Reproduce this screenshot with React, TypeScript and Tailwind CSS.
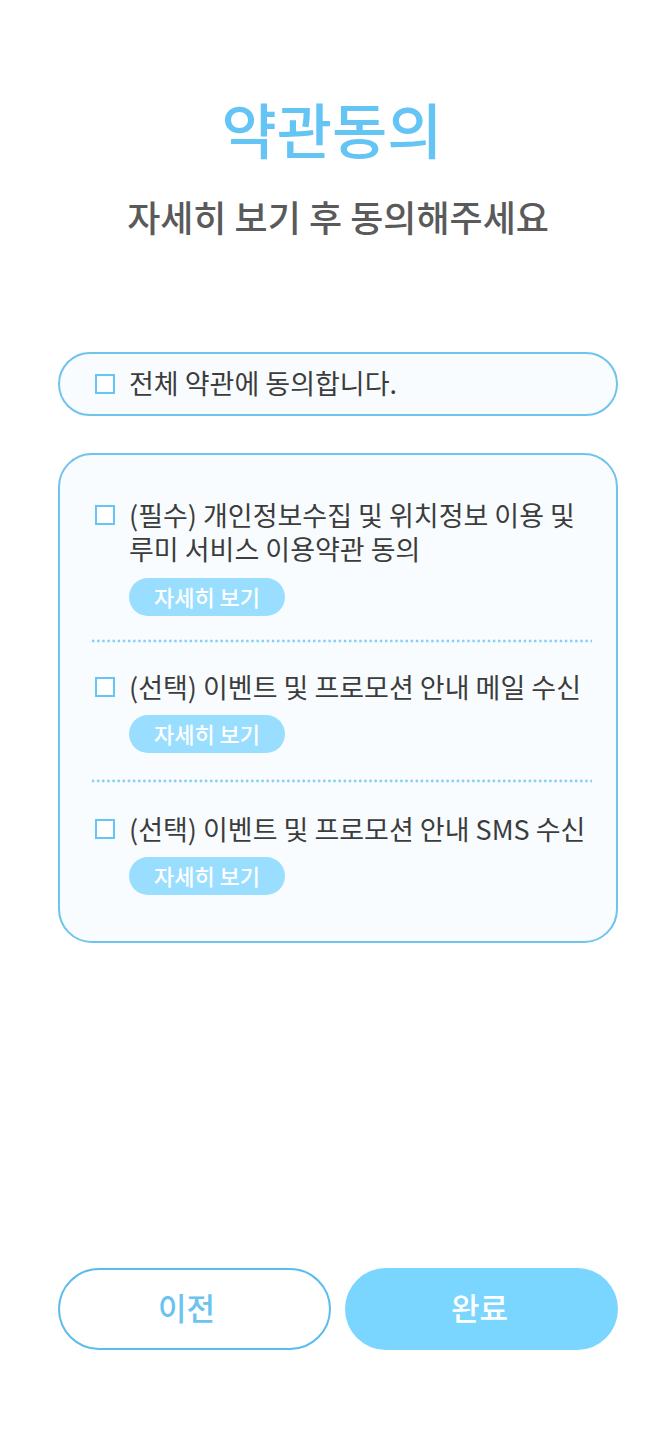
import { useState } from "react";

const terms = [
  { id: "required", lines: ["(필수) 개인정보수집 및 위치정보 이용 및", "루미 서비스 이용약관 동의"], gap: "" },
  { id: "email", lines: ["(선택) 이벤트 및 프로모션 안내 메일 수신"], gap: "pt-[23px] pb-[27px]" },
  { id: "sms", lines: ["(선택) 이벤트 및 프로모션 안내 SMS 수신"], gap: "pt-[26px] pb-[29px]" },
];

const box =
  "size-5 shrink-0 appearance-none border-2 border-[#64c5f7] bg-white checked:bg-[#64c5f7]";

function Divider({ round }: { round: boolean }) {
  return (
    <svg className="block h-1 w-full" aria-hidden="true">
      {round ? (
        <line x1="1" y1="2" x2="100%" y2="2" stroke="#80d0f8" strokeWidth="2.8" strokeDasharray="0 5.14" strokeLinecap="round" />
      ) : (
        <line x1="0" y1="2" x2="100%" y2="2" stroke="#80d0f8" strokeWidth="2.4" strokeDasharray="2.4 2.74" />
      )}
    </svg>
  );
}

export default function App() {
  const [checked, setChecked] = useState<string[]>([]);
  const all = checked.length === terms.length;
  const toggle = (id: string) =>
    setChecked((c) => (c.includes(id) ? c.filter((x) => x !== id) : [...c, id]));

  return (
    <main className="flex min-h-screen flex-col bg-white pt-[92px] pr-12 pb-[90px] pl-[58px] font-['Noto_Sans_CJK_KR',sans-serif] text-[#3c3c3c]">
      <header className="text-center">
        <h1 className="pr-3 text-[60px] leading-[72px] font-medium text-[#64c5f5]">약관동의</h1>
        <p className="mt-7 text-[36px] leading-[48px] font-medium whitespace-nowrap text-[#5a5a5a]">자세히 보기 후 동의해주세요</p>
      </header>
      <label className="mt-28 flex h-16 items-center gap-[14px] rounded-full border-2 border-[#6fc3ec] bg-[#f8fcff] px-[35px] text-[27px] leading-[34px]">
        <input type="checkbox" className={box} checked={all} onChange={() => setChecked(all ? [] : terms.map((t) => t.id))} />
        <span className="pb-0.5">전체 약관에 동의합니다.</span>
      </label>
      <section className="mt-[37px] rounded-[34px] border-2 border-[#6fc3ec] bg-[#f8fcff] pt-[43px] pr-6 pb-[46px] pl-8">
        {terms.map((t, i) => (
          <div key={t.id}>
            {i > 0 && <div className={t.gap}><Divider round={i > 1} /></div>}
            <label className="flex items-start gap-[14px] pl-[3px] text-[27px] leading-[34px] whitespace-nowrap">
              <input type="checkbox" className={box + " mt-[7px]"} checked={checked.includes(t.id)} onChange={() => toggle(t.id)} />
              <span>{t.lines.map((l) => <span key={l} className="block">{l}</span>)}</span>
            </label>
            <button type="button" className={"ml-[37px] flex h-[38px] w-[156px] items-center justify-center rounded-full bg-[#99deff] pb-0.5 text-[22px] font-medium text-white " + (i > 0 ? "mt-[11px]" : "mt-3")}>
              자세히 보기
            </button>
          </div>
        ))}
      </section>
      <footer className="mt-auto grid grid-cols-2 gap-[14px] text-[31px] leading-[40px] font-medium">
        <button type="button" className="h-[82px] rounded-full border-2 border-[#5cbcee] pr-4 pb-1 text-[#6bc4f0]">이전</button>
        <button type="button" className="h-[82px] rounded-full bg-[#7ad5ff] pr-1 pb-1 text-white">완료</button>
      </footer>
    </main>
  );
}
